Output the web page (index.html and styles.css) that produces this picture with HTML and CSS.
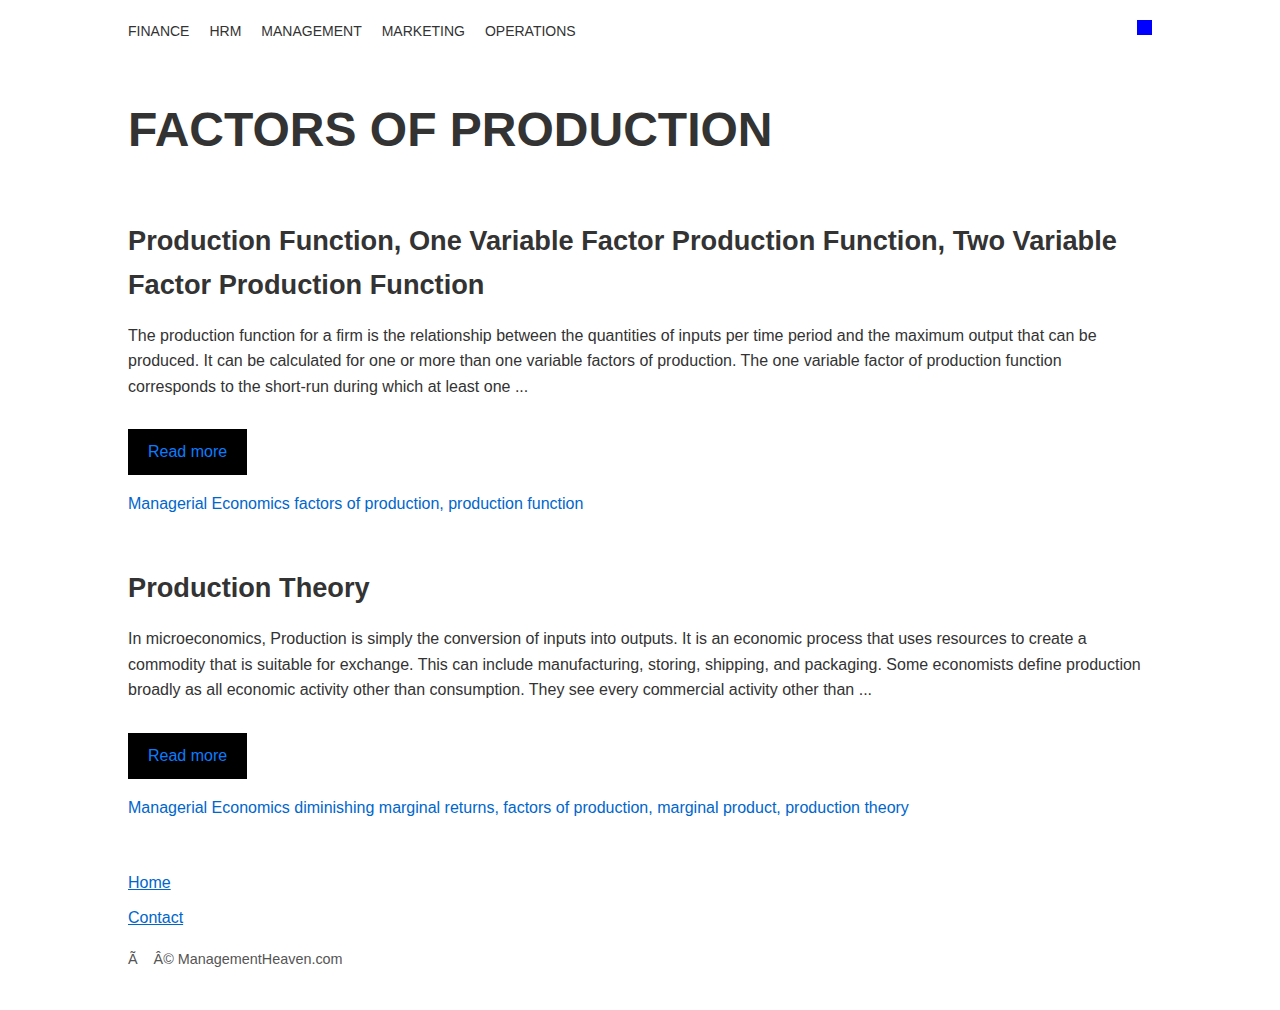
FILE: index.html
```html
<!DOCTYPE html>
<html lang="en">
<head>
<meta charset="utf-8">
<title>Factors of Production</title>
<link rel="stylesheet" href="styles.css">
</head>
<body>
<div class="wrap">
  <header class="top">
    <nav class="menu">
      <a href="#">FINANCE</a>
      <a href="#">HRM</a>
      <a href="#">MANAGEMENT</a>
      <a href="#">MARKETING</a>
      <a href="#">OPERATIONS</a>
    </nav>
    <span class="square"></span>
  </header>

  <h1 class="page-title">FACTORS OF PRODUCTION</h1>

  <article class="post">
    <h2 class="post-title">Production Function, One Variable Factor Production Function, Two Variable Factor Production Function</h2>
    <p class="excerpt">The production function for a firm is the relationship between the quantities of inputs per time period and the maximum output that can be produced. It can be calculated for one or more than one variable factors of production. The one variable factor of production function corresponds to the short-run during which at least one ...</p>
    <a class="more" href="#">Read more</a>
    <div class="tags"><a href="#">Managerial Economics</a> <a href="#">factors of production</a>, <a href="#">production function</a></div>
  </article>

  <article class="post">
    <h2 class="post-title">Production Theory</h2>
    <p class="excerpt">In microeconomics, Production is simply the conversion of inputs into outputs. It is an economic process that uses resources to create a commodity that is suitable for exchange. This can include manufacturing, storing, shipping, and packaging. Some economists define production broadly as all economic activity other than consumption. They see every commercial activity other than ...</p>
    <a class="more" href="#">Read more</a>
    <div class="tags"><a href="#">Managerial Economics</a> <a href="#">diminishing marginal returns</a>, <a href="#">factors of production</a>, <a href="#">marginal product</a>, <a href="#">production theory</a></div>
  </article>

  <footer class="foot">
    <a class="foot-link" href="#">Home</a>
    <a class="foot-link" href="#">Contact</a>
    <p class="copy">Ã&nbsp;&nbsp;&nbsp;&nbsp;Â© ManagementHeaven.com</p>
  </footer>
</div>
</body>
</html>
```
FILE: styles.css
```css
html, body {
  margin: 0;
  padding: 0;
  background: #fff;
}
body {
  font-family: "Liberation Sans", Arial, sans-serif;
  color: #333;
}
.wrap {
  width: 1024px;
  margin: 0 auto;
}
.top {
  display: flex;
  justify-content: space-between;
  align-items: flex-start;
  padding-top: 20px;
}
.menu {
  display: flex;
  gap: 20px;
  font-size: 14px;
  line-height: 22px;
}
.menu a {
  color: #333;
  text-decoration: none;
}
.square {
  width: 15px;
  height: 15px;
  background: #0000ff;
}
.page-title {
  margin: 59px 0 60px;
  font-size: 48px;
  line-height: 1.2;
  font-weight: bold;
  color: #333;
}
.post {
  margin-bottom: 49px;
}
.post-title {
  margin: 0;
  font-size: 27.2px;
  line-height: 44px;
  font-weight: bold;
  color: #333;
}
.excerpt {
  margin: 16px 0 30px;
  font-size: 16px;
  line-height: 25.6px;
  color: #333;
}
.more {
  display: inline-block;
  background: #000;
  color: #0a7cff;
  font-size: 16px;
  line-height: 22px;
  padding: 12px 20px;
  text-decoration: none;
}
.tags {
  margin-top: 16px;
  font-size: 16px;
  line-height: 25.6px;
  color: #0066cc;
}
.tags a {
  color: #0066cc;
  text-decoration: none;
}
.foot {
  display: flex;
  flex-direction: column;
  align-items: flex-start;
  gap: 10px;
  padding-top: 1px;
}
.foot-link {
  color: #0066cc;
  font-size: 16px;
  line-height: 25px;
  text-decoration: underline;
}
.copy {
  margin: 9px 0 40px;
  font-size: 14.4px;
  line-height: 20px;
  color: #555;
}
```
